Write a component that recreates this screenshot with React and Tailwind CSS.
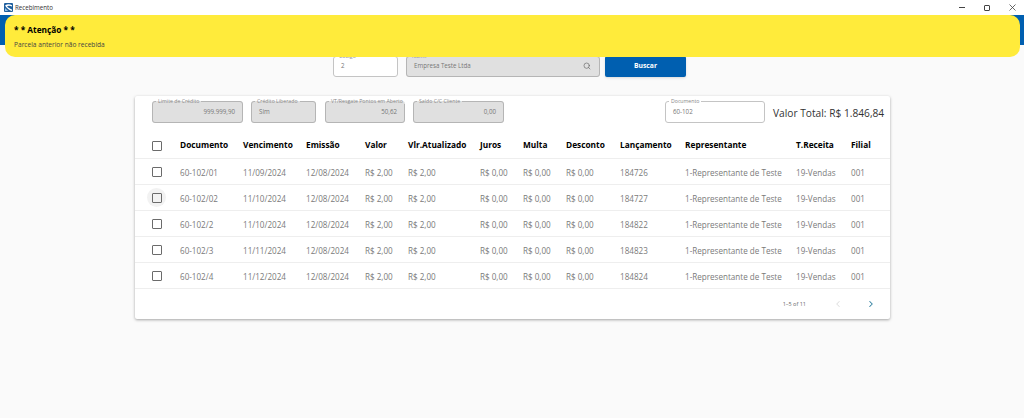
import React from "react";
import { ChevronLeft, ChevronRight, Search } from "lucide-react";

const rows = [
  ["60-102/01", "11/09/2024", "184726"],
  ["60-102/02", "11/10/2024", "184727"],
  ["60-102/2", "11/10/2024", "184822"],
  ["60-102/3", "11/11/2024", "184823"],
  ["60-102/4", "11/12/2024", "184824"],
];

const gridCols =
  "grid grid-cols-[45px_63px_63px_59px_43px_72px_43px_43px_54px_65px_111px_55px_1fr] items-center";

const Field = ({ label, value, width, height = "h-[25px]", gray, right, children }) => (
  <fieldset
    className={`${width} ${height} min-w-0 shrink-0 rounded-[3px] border px-[7px] flex items-center ${
      gray ? "bg-[#e0e0e0] border-[#b5b5b5]" : "bg-white border-[#c4c4c4]"
    }`}
  >
    <legend className="-ml-[4px] px-[2px] text-[5.2px] leading-[6px] whitespace-nowrap text-[#888]">{label}</legend>
    <span className={`flex-1 -mt-[3px] text-[6.2px] text-[#777] ${right ? "text-right" : ""}`}>{value}</span>
    {children}
  </fieldset>
);

const Check = ({ hover }) => (
  <div className="pl-[12px]">
    <div className={`w-[19px] h-[19px] rounded-full flex items-center justify-center ${hover ? "bg-[#f2f2f2]" : ""}`}>
      <div className="w-[10px] h-[10px] rounded-[1px] border border-[#6b6b6b]" />
    </div>
  </div>
);

const App = () => {
  return (
    <div className="relative w-[1024px] h-[418px] overflow-hidden bg-[#fafafa] font-['Open_Sans',sans-serif]">
      <div className="h-[15px] bg-white flex items-center pl-[4px]">
        <svg width="9" height="9" viewBox="0 0 9 9">
          <rect width="9" height="9" rx="1" fill="#1f5f9e" />
          <path d="M1 2.5C3.5 0.8 6 1.2 8 2.2L8 3.6C6 2.6 4 2.6 3 3.4C4.5 4.6 6.5 6 8 6.4L8 8C5 7.4 3 5.4 1 2.5Z" fill="#fff" />
          <path d="M1 5L4.2 8H1Z" fill="#8fc1e8" />
        </svg>
        <span className="ml-[2px] text-[6.2px] text-[#333]">Recebimento</span>
        <div className="ml-auto flex items-center gap-[19px] pr-[8px]">
          <div className="w-[6px] h-px bg-[#444]" />
          <div className="w-[6px] h-[6px] rounded-[1px] border border-[#444]" />
          <svg width="7" height="7" viewBox="0 0 7 7" stroke="#444" strokeWidth="0.8">
            <path d="M0.5 0.5L6.5 6.5M6.5 0.5L0.5 6.5" />
          </svg>
        </div>
      </div>
      <div className="h-[30px] bg-[#005fb0]" />

      <div className="h-[32px] ml-[333px] flex items-end">
        <Field label="Código" value="2" width="w-[65px]" height="h-[24px]" />
        <div className="ml-[8px]">
          <Field label="Nome" value="Empresa Teste Ltda" width="w-[194px]" height="h-[24px]" gray>
            <Search size={8} strokeWidth={2} className="-mt-[3px] mr-[1px] text-[#666]" />
          </Field>
        </div>
        <button className="ml-[5px] w-[81px] h-[21px] rounded-[2px] bg-[#005fb0] text-white text-[6.8px] font-bold shadow-sm">
          Buscar
        </button>
      </div>

      <div className="ml-[135px] mt-[19px] w-[755px] h-[223px] bg-white rounded-[2px] shadow-[0_1px_3px_rgba(0,0,0,0.35)]">
        <div className="h-[37px] pt-[2px] pl-[17px] flex items-start">
          <Field label="Limite de Crédito" value="999.999,90" width="w-[91px]" gray right />
          <div className="ml-[8px]">
            <Field label="Crédito Liberado" value="Sim" width="w-[65px]" gray />
          </div>
          <div className="ml-[9px]">
            <Field label="VT/Resgate Pontos em Aberto" value="50,62" width="w-[80px]" gray right />
          </div>
          <div className="ml-[8px]">
            <Field label="Saldo C/C Cliente" value="0,00" width="w-[91px]" gray right />
          </div>
          <div className="ml-[161px]">
            <Field label="Documento" value="60-102" width="w-[100px]" />
          </div>
          <span className="ml-[8px] self-center mb-[5px] text-[10.2px] leading-none text-[#333] whitespace-nowrap">
            Valor Total: R$ 1.846,84
          </span>
        </div>

        <div className={`${gridCols} h-[26px] border-b border-[#eeeeee] text-[8.3px] font-bold text-black`}>
          <Check />
          <span>Documento</span>
          <span>Vencimento</span>
          <span>Emissão</span>
          <span>Valor</span>
          <span>Vlr.Atualizado</span>
          <span>Juros</span>
          <span>Multa</span>
          <span>Desconto</span>
          <span>Lançamento</span>
          <span>Representante</span>
          <span>T.Receita</span>
          <span>Filial</span>
        </div>

        {rows.map((r, i) => (
          <div
            key={r[0]}
            className={`${gridCols} h-[26px] border-b border-[#eeeeee] text-[8.1px] text-[#7a7a7a] [&>span]:mt-[3px]`}
          >
            <Check hover={i === 1} />
            <span>{r[0]}</span>
            <span>{r[1]}</span>
            <span>12/08/2024</span>
            <span>R$ 2,00</span>
            <span>R$ 2,00</span>
            <span>R$ 0,00</span>
            <span>R$ 0,00</span>
            <span>R$ 0,00</span>
            <span>{r[2]}</span>
            <span>1-Representante de Teste</span>
            <span>19-Vendas</span>
            <span>001</span>
          </div>
        ))}

        <div className="h-[30px] flex items-center justify-end pr-[14px] text-[#666]">
          <span className="text-[5.5px]">1–5 of 11</span>
          <ChevronLeft size={10} strokeWidth={2.5} className="ml-[27px] text-[#e0e0e0]" />
          <ChevronRight size={10} strokeWidth={2.5} className="ml-[23px] text-[#2f7f9f]" />
        </div>
      </div>

      <div className="absolute left-[5px] right-[4px] top-[15px] h-[42px] rounded-[10px] bg-[#ffeb3b] pl-[9px] pt-[9px]">
        <p className="text-[8.3px] leading-[12px] font-bold text-black">* * Atenção * *</p>
        <p className="mt-[3px] text-[6.6px] leading-[11px] text-[#444]">Parcela anterior não recebida</p>
      </div>
    </div>
  );
};

export default App;
